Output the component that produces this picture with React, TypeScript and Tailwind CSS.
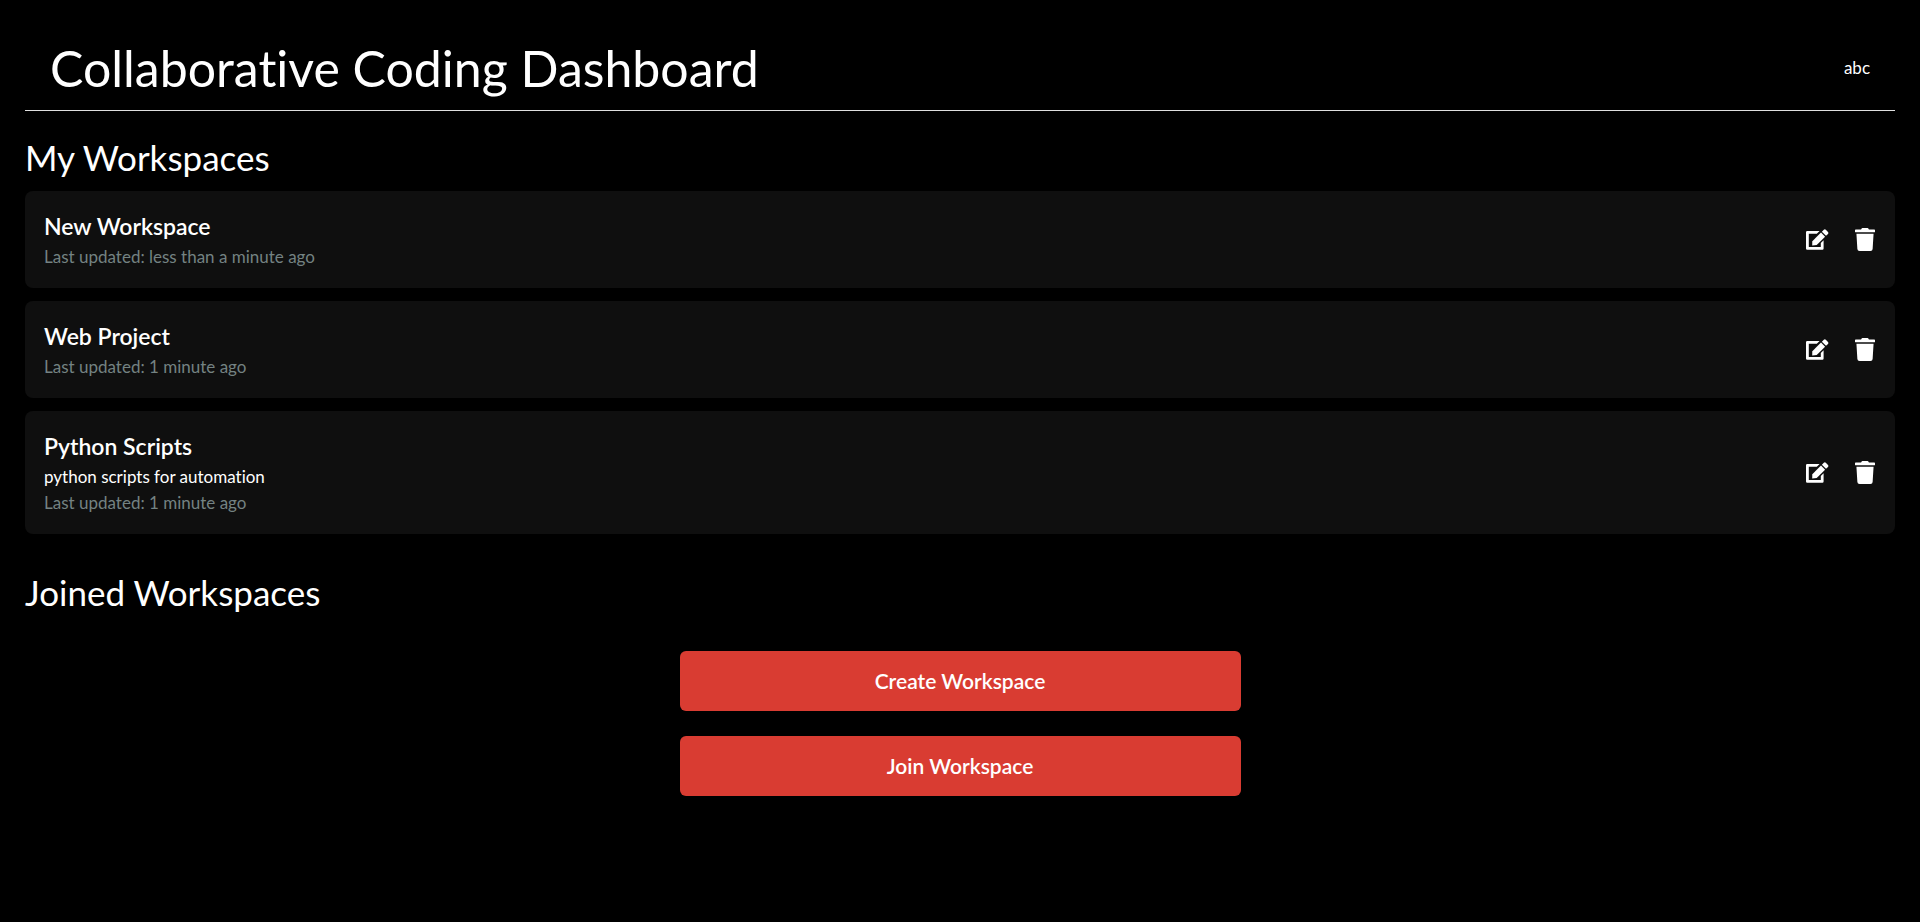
import { FaTrash } from "react-icons/fa";

type Workspace = { name: string; description?: string; updated: string };

const workspaces: Workspace[] = [
  { name: "New Workspace", updated: "less than a minute ago" },
  { name: "Web Project", updated: "1 minute ago" },
  { name: "Python Scripts", description: "python scripts for automation", updated: "1 minute ago" },
];

function EditIcon() {
  return (
    <svg viewBox="0 0 25 23" className="h-[23px] w-[25px]" fill="none" aria-hidden="true">
      <path
        d="M15.6 3H3.2Q2 3 2 4.2V20.6Q2 21.8 3.2 21.8H18.4Q19.6 21.8 19.6 20.6V12.2L16.8 15V19H4.8V5.8H12.8z"
        fill="currentColor"
      />
      <path d="M8.2 17.4 8.3 13.3 17 4.6 21.1 8.7 12.7 17.1z" fill="currentColor" />
      <path
        d="M17.9 3.7 19.8 1.8Q20.8 0.9 21.8 1.8L24 4Q24.9 5 24 6L22 7.8z"
        fill="currentColor"
      />
    </svg>
  );
}

function WorkspaceCard({ item }: { item: Workspace }) {
  return (
    <li className="flex items-center justify-between rounded-lg bg-[#0f0f0f] px-[19px] pt-5 pb-[18px]">
      <div>
        <h3 className="text-[23px] leading-[30px] font-semibold">{item.name}</h3>
        <div className="mt-[3px] text-[17px] leading-[26px]">
          {item.description && <p>{item.description}</p>}
          <p className="text-[#748282]">Last updated: {item.updated}</p>
        </div>
      </div>
      <div className="-mt-0.5 flex items-center gap-[26px] pr-px">
        <button type="button" aria-label={"Edit " + item.name}><EditIcon /></button>
        <button type="button" aria-label={"Delete " + item.name}><FaTrash className="h-[23px] w-5" /></button>
      </div>
    </li>
  );
}

export default function App() {
  return (
    <div className="min-h-screen bg-black px-[25px] pt-[25px] font-[Lato,sans-serif] text-white [font-variant-ligatures:none]">
      <header className="flex items-center justify-between border-b border-[#e0e0e0] px-[25px] pt-[13px] pb-[12px]">
        <h1 className="text-[50px] leading-[60px]">Collaborative Coding Dashboard</h1>
        <a href="#profile" className="text-[17px]">abc</a>
      </header>
      <main>
        <section className="mt-[24px]">
          <h2 className="text-[35px] leading-[44px]">My Workspaces</h2>
          <ul className="mt-[12px] flex flex-col gap-[13px]">
            {workspaces.map((item) => <WorkspaceCard key={item.name} item={item} />)}
          </ul>
        </section>
        <section className="mt-[36px]">
          <h2 className="text-[35px] leading-[44px]">Joined Workspaces</h2>
        </section>
        <div className="mx-auto mt-[37px] flex w-[30%] flex-col gap-[25px]">
          <button type="button" className="h-[60px] rounded-md bg-[#d93c32] text-[21px] font-semibold">Create Workspace</button>
          <button type="button" className="h-[60px] rounded-md bg-[#d93c32] text-[21px] font-semibold">Join Workspace</button>
        </div>
      </main>
    </div>
  );
}
